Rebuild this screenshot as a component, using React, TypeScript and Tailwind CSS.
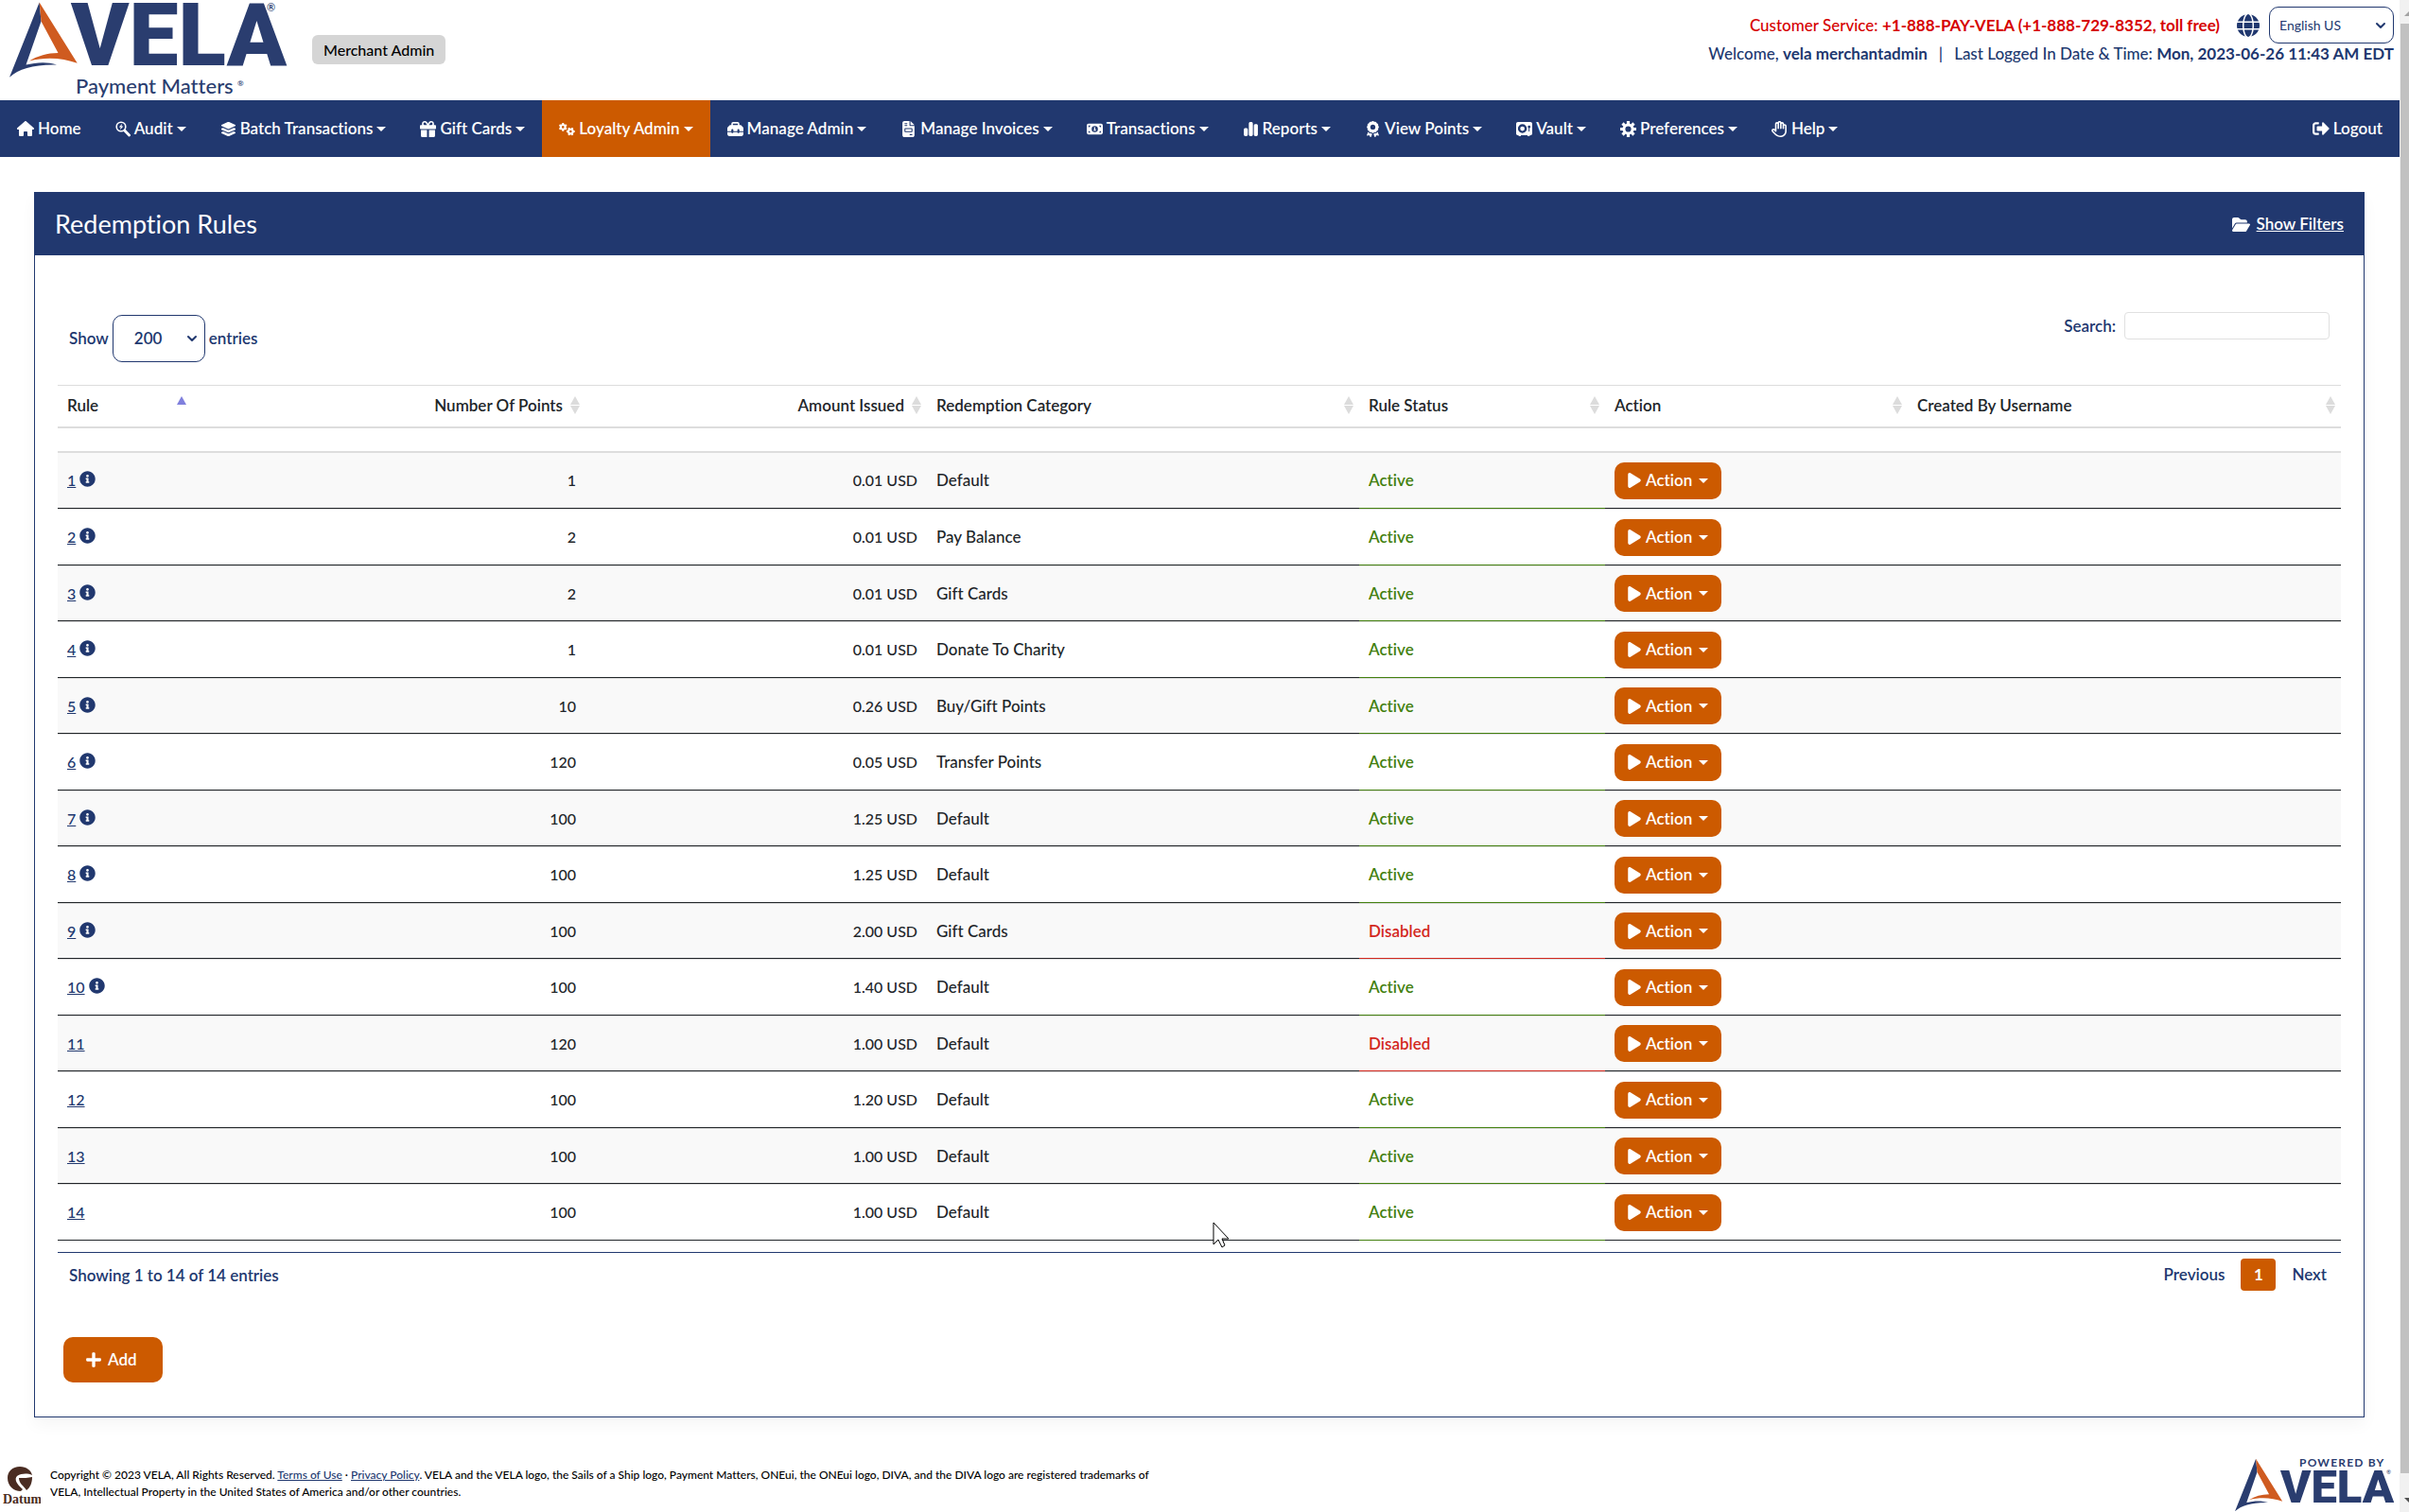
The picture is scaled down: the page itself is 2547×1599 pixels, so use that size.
import React, { useState } from "react";
import {
  FaAward,
  FaChartSimple,
  FaFileInvoice,
  FaFolderOpen,
  FaGears,
  FaGift,
  FaGlobe,
  FaHouse,
  FaLayerGroup,
  FaMoneyBill1,
  FaPlay,
  FaRegHand,
  FaToolbox,
  FaVault,
} from "react-icons/fa6";
import { FaInfoCircle, FaPlus, FaSignOutAlt } from "react-icons/fa";
import { FiChevronDown } from "react-icons/fi";

interface Rule {
  id: number;
  points: number;
  amount: string;
  category: string;
  status: "Active" | "Disabled";
  info?: boolean;
}

const rules: Rule[] = [
  { id: 1, points: 1, amount: "0.01 USD", category: "Default", status: "Active", info: true },
  { id: 2, points: 2, amount: "0.01 USD", category: "Pay Balance", status: "Active", info: true },
  { id: 3, points: 2, amount: "0.01 USD", category: "Gift Cards", status: "Active", info: true },
  { id: 4, points: 1, amount: "0.01 USD", category: "Donate To Charity", status: "Active", info: true },
  { id: 5, points: 10, amount: "0.26 USD", category: "Buy/Gift Points", status: "Active", info: true },
  { id: 6, points: 120, amount: "0.05 USD", category: "Transfer Points", status: "Active", info: true },
  { id: 7, points: 100, amount: "1.25 USD", category: "Default", status: "Active", info: true },
  { id: 8, points: 100, amount: "1.25 USD", category: "Default", status: "Active", info: true },
  { id: 9, points: 100, amount: "2.00 USD", category: "Gift Cards", status: "Disabled", info: true },
  { id: 10, points: 100, amount: "1.40 USD", category: "Default", status: "Active", info: true },
  { id: 11, points: 120, amount: "1.00 USD", category: "Default", status: "Disabled" },
  { id: 12, points: 100, amount: "1.20 USD", category: "Default", status: "Active" },
  { id: 13, points: 100, amount: "1.00 USD", category: "Default", status: "Active" },
  { id: 14, points: 100, amount: "1.00 USD", category: "Default", status: "Active" },
];

function AuditIcon({ className }: { className?: string }) {
  return (
    <svg viewBox="0 0 16 17" className={className}>
      <circle cx="6" cy="6" r="4.8" fill="none" stroke="currentColor" strokeWidth="1.6" />
      <path d="M7.2 2.8L3.8 6.6h2L4.8 9.4l3.6-4h-2z" fill="currentColor" />
      <path d="M9.8 10l4.8 5" stroke="currentColor" strokeWidth="2.8" strokeLinecap="round" />
    </svg>
  );
}

function GearIcon({ className }: { className?: string }) {
  return (
    <svg viewBox="0 0 17 17" className={className}>
      <circle cx="8.5" cy="8.5" r="4.6" fill="none" stroke="currentColor" strokeWidth="3" />
      <path
        d="M8.5 0v3M8.5 14v3M0 8.5h3M14 8.5h3M2.5 2.5l2.1 2.1M12.4 12.4l2.1 2.1M2.5 14.5l2.1-2.1M12.4 4.6l2.1-2.1"
        stroke="currentColor"
        strokeWidth="3.2"
      />
    </svg>
  );
}

const menu = [
  { label: "Audit", icon: AuditIcon },
  { label: "Batch Transactions", icon: FaLayerGroup },
  { label: "Gift Cards", icon: FaGift },
  { label: "Loyalty Admin", icon: FaGears, active: true },
  { label: "Manage Admin", icon: FaToolbox },
  { label: "Manage Invoices", icon: FaFileInvoice },
  { label: "Transactions", icon: FaMoneyBill1 },
  { label: "Reports", icon: FaChartSimple },
  { label: "View Points", icon: FaAward },
  { label: "Vault", icon: FaVault },
  { label: "Preferences", icon: GearIcon },
  { label: "Help", icon: FaRegHand },
];

const columns = [
  { label: "Rule", width: "w-[142px]" },
  { label: "Number Of Points", width: "w-[416px]", right: true },
  { label: "Amount Issued", width: "w-[361px]", right: true },
  { label: "Redemption Category", width: "w-[457px]" },
  { label: "Rule Status", width: "w-[260px]" },
  { label: "Action", width: "w-[320px]" },
  { label: "Created By Username", width: "w-[458px]" },
];

function Sail() {
  return (
    <g>
      <path
        fill="#2a3d6f"
        d="M41.6 2.5 L10 81.7 C20 73 36 68 60 68.6 C50 65 38 66 27.5 68.6 L43.5 22.5 Z"
      />
      <path
        fill="#cf5b20"
        d="M41.6 2.5 L81.7 66.8 C66 61 48 60 31 64.5 C40 59 50 56 61.5 56 L43.5 22.5 Z"
      />
    </g>
  );
}

function VelaLogo() {
  return (
    <svg width="306" height="106" viewBox="0 0 306 106" role="img" aria-label="VELA" className="overflow-visible">
      <Sail />
      <text x="75" y="69" fill="#2a3d6f" className="font-['Roboto'] text-[93px] font-black">
        VELA
      </text>
      <text x="282" y="12" fill="#2a3d6f" className="font-['Lato'] text-[11px]">
        ®
      </text>
      <text x="80" y="99" fill="#2a3d6f" className="font-['Lato'] text-[22px] font-medium">
        Payment Matters
      </text>
      <text x="251" y="91" fill="#2a3d6f" className="font-['Lato'] text-[8px]">
        ®
      </text>
    </svg>
  );
}

function PoweredByLogo() {
  return (
    <svg
      width="172"
      height="60"
      viewBox="0 0 172 60"
      role="img"
      aria-label="Powered by VELA"
      className="overflow-visible"
    >
      <g transform="translate(-6 2) scale(0.7)">
        <Sail />
      </g>
      <text x="69" y="12" fill="#2a3d6f" className="font-['Lato'] text-xs font-bold tracking-widest">
        POWERED BY
      </text>
      <text x="49" y="50" fill="#2a3d6f" className="font-['Roboto'] text-[49px] font-black">
        VELA
      </text>
      <text x="161" y="20" fill="#2a3d6f" className="font-['Lato'] text-[6px]">
        ®
      </text>
    </svg>
  );
}

function DatumLogo() {
  return (
    <svg width="40" height="42" viewBox="0 0 40 42" role="img" aria-label="Datum">
      <path
        fill="#4a2c22"
        d="M18 0 C25 0 30 4 31 9 C26 7 20 7 15 10 C12 13 14 18 21 24 L19 26 C11 26 5 20 5 12 C5 5 10 0 18 0 Z"
      />
      <path fill="#4a2c22" d="M17 12 C22 12 27 12 31 11 C31 17 29 22 25 25 C22 20 17 18 17 12 Z" />
      <text x="0" y="39" fill="#4a2c22" className="font-['Liberation_Serif'] text-[14px] font-bold">
        Datum
      </text>
    </svg>
  );
}

function Caret() {
  return (
    <svg width="10" height="5" viewBox="0 0 10 5" className="shrink-0 fill-white">
      <path d="M0 0h10L5 5z" />
    </svg>
  );
}

function SortIcon({ asc }: { asc?: boolean }) {
  return (
    <svg width="10" height="20" viewBox="0 0 10 20" className="shrink-0">
      {asc ? (
        <path d="M0 9L5 0l5 9z" fill="#8080dd" />
      ) : (
        <path d="M0 9L5 0l5 9zM0 10L5 19l5-9z" fill="#dcdcdc" />
      )}
    </svg>
  );
}

export default function App() {
  const [entries, setEntries] = useState("200");
  const [search, setSearch] = useState("");

  return (
    <div className="relative flex min-h-screen bg-white font-['Lato',sans-serif] text-[17px] leading-6 font-semibold text-[#21386f] [font-variant-ligatures:none]">
      <div className="flex min-w-0 flex-1 flex-col">
        <header className="flex h-[106px] items-start">
          <VelaLogo />
          <span className="mt-[37px] ml-6 rounded-md bg-[#d5d5d5] px-3 py-1 text-base leading-[23px] font-medium text-black">
            Merchant Admin
          </span>
          <div className="mt-[7px] mr-[6px] ml-auto flex flex-col items-end">
            <div className="flex items-center">
              <p className="font-medium text-[#d60000]">
                Customer Service: <b>+1-888-PAY-VELA (+1-888-729-8352, toll free)</b>
              </p>
              <FaGlobe className="mr-[10px] ml-[18px] size-6" />
              <div className="relative">
                <select
                  aria-label="Language"
                  className="h-[39px] w-[132px] appearance-none rounded-[10px] border border-[#21386f] bg-white pl-[10px] text-sm font-normal"
                >
                  <option>English US</option>
                </select>
                <FiChevronDown className="pointer-events-none absolute top-3 right-[6px] size-4 stroke-3" />
              </div>
            </div>
            <p className="leading-[22px] font-medium">
              Welcome, <b>vela merchantadmin</b>
              <span className="mx-3">|</span>
              Last Logged In Date &amp; Time: <b>Mon, 2023-06-26 11:43 AM EDT</b>
            </p>
          </div>
        </header>

        <nav className="flex h-[60px] bg-[#21386f] text-white">
          <a href="#" className="flex items-center gap-1 px-[18px]">
            <FaHouse className="h-[18px] w-auto" />
            Home
          </a>
          {menu.map(({ label, icon: Icon, active }) => (
            <button
              key={label}
              className={
                active ? "flex items-center gap-1 bg-[#cc5a00] px-[18px]" : "flex items-center gap-1 px-[18px]"
              }
            >
              <Icon className="h-[17px] w-auto" />
              {label}
              <Caret />
            </button>
          ))}
          <a href="#" className="ml-auto flex items-center gap-1 px-[18px]">
            <FaSignOutAlt className="size-[18px]" />
            Logout
          </a>
        </nav>

        <main className="mt-[37px] mr-[37px] ml-9 border border-[#21386f] shadow-[0_8px_16px_rgba(0,0,0,0.04)]">
          <div className="flex h-[66px] items-center justify-between bg-[#21386f] px-[21px] text-white">
            <h1 className="text-[27px] font-normal">Redemption Rules</h1>
            <a href="#" className="flex items-center gap-[7px]">
              <FaFolderOpen className="h-[19px] w-auto" />
              <span className="underline">Show Filters</span>
            </a>
          </div>

          <div className="px-6 pb-[36px]">
            <div className="flex items-start justify-between px-3 pt-[60px]">
              <label className="mt-[3px] flex items-center gap-1">
                Show
                <span className="relative">
                  <select
                    value={entries}
                    onChange={(e) => setEntries(e.target.value)}
                    className="h-[50px] w-[98px] appearance-none rounded-[10px] border border-[#21386f] bg-white pl-[22px]"
                  >
                    <option>50</option>
                    <option>100</option>
                    <option>200</option>
                  </select>
                  <FiChevronDown className="pointer-events-none absolute top-[17px] right-[6px] size-4 stroke-3" />
                </span>
                entries
              </label>
              <label className="flex items-center gap-[9px]">
                Search:
                <input
                  type="search"
                  value={search}
                  onChange={(e) => setSearch(e.target.value)}
                  className="h-[29px] w-[217px] rounded-sm border border-[#e0e0e0] px-2"
                />
              </label>
            </div>

            <table className="mt-6 w-full table-fixed border-separate border-spacing-0 text-[#212529]">
              <thead>
                <tr className="h-[46px]">
                  {columns.map((col, i) => (
                    <th
                      key={col.label}
                      className={`${col.width} border-t border-b-2 border-[#ddd] pr-[6px] pb-[2px] pl-[10px] font-semibold`}
                    >
                      <div
                        className={
                          col.right
                            ? "flex items-center justify-end gap-2"
                            : "flex items-center justify-between gap-2"
                        }
                      >
                        {col.label}
                        <SortIcon asc={i === 0} />
                      </div>
                    </th>
                  ))}
                </tr>
                <tr className="h-[26px]">
                  {columns.map((col) => (
                    <td key={col.label} className="border-b-2 border-[#ddd]" />
                  ))}
                </tr>
              </thead>
              <tbody>
                {rules.map((rule) => (
                  <tr
                    key={rule.id}
                    className="h-[60px] odd:h-[59px] odd:bg-[#f9f9f9] first:h-[58px] [&>td]:border-t [&>td]:border-b [&>td]:border-t-[#ddd] [&>td]:border-b-[#212529] [&>td]:px-[10px] first:[&>td]:border-t-0"
                  >
                    <td className="text-base font-medium text-[#21386f]">
                      <span className="flex items-center gap-1">
                        <a href="#" className="underline">
                          {rule.id}
                        </a>
                        {rule.info && <FaInfoCircle className="mb-[3px] size-[17px]" />}
                      </span>
                    </td>
                    <td className="text-right text-base font-medium">{rule.points}</td>
                    <td className="text-right text-base font-medium">{rule.amount}</td>
                    <td className="font-medium">{rule.category}</td>
                    <td
                      className={
                        rule.status === "Active"
                          ? "border-b-[#43800f]! text-[#43800f]"
                          : "border-b-[#d3281e]! text-[#d3281e]"
                      }
                    >
                      {rule.status}
                    </td>
                    <td>
                      <button className="flex h-[39px] w-[113px] items-center gap-[3px] rounded-[10px] bg-[#cc5a00] pl-3 text-white">
                        <FaPlay className="h-[18px] w-auto" />
                        Action
                        <span className="ml-1">
                          <Caret />
                        </span>
                      </button>
                    </td>
                    <td></td>
                  </tr>
                ))}
              </tbody>
            </table>

            <div className="mt-3 flex items-start justify-between border-t border-[#21386f] px-3 pt-[6px]">
              <p className="pt-[6px]">Showing 1 to 14 of 14 entries</p>
              <div className="flex items-center gap-[17px] pr-[3px]">
                <button>Previous</button>
                <button className="h-[34px] w-[37px] rounded-sm bg-[#cc5a00] font-bold text-white">1</button>
                <button>Next</button>
              </div>
            </div>

            <button className="mt-[49px] ml-[6px] flex h-12 w-[105px] items-center gap-[6px] rounded-[10px] bg-[#cc5a00] pl-[23px] text-white">
              <FaPlus className="size-[18px]" />
              Add
            </button>
          </div>
        </main>

        <footer className="mt-auto flex h-[60px] items-start pl-[3px] text-xs leading-[18px] font-medium text-black">
          <div className="pt-3">
            <DatumLogo />
          </div>
          <p className="w-[1200px] pt-3 pl-[10px]">
            Copyright © 2023 VELA, All Rights Reserved.{" "}
            <a href="#" className="text-[#21386f] underline">
              Terms of Use
            </a>{" "}
            ·{" "}
            <a href="#" className="text-[#21386f] underline">
              Privacy Policy
            </a>
            . VELA and the VELA logo, the Sails of a Ship logo, Payment Matters, ONEui, the ONEui logo, DIVA, and the
            DIVA logo are registered trademarks of
            <br />
            VELA, Intellectual Property in the United States of America and/or other countries.
          </p>
          <div className="mr-[3px] ml-auto">
            <PoweredByLogo />
          </div>
        </footer>
      </div>

      <div className="flex w-[10px] flex-col items-end justify-between overflow-hidden bg-[#f1f1f1] pt-3 pb-[10px] pl-px">
        <svg width="5" height="5" viewBox="0 0 5 5" className="shrink-0">
          <path d="M0 5L5 0v5z" fill="#a3a3a3" />
        </svg>
        <div className="mt-2 mb-[26px] w-full flex-1 bg-[#c1c1c1]"></div>
        <svg width="5" height="5" viewBox="0 0 5 5" className="shrink-0">
          <path d="M0 0h5v5z" fill="#505050" />
        </svg>
      </div>

      {/* mouse pointer */}
      <svg width="18" height="28" viewBox="0 0 18 28" className="absolute top-[1292px] left-[1282px]">
        <path d="M1 1v23l5-5 4 8 3-2-3-7h7z" fill="white" stroke="black" />
      </svg>
    </div>
  );
}
